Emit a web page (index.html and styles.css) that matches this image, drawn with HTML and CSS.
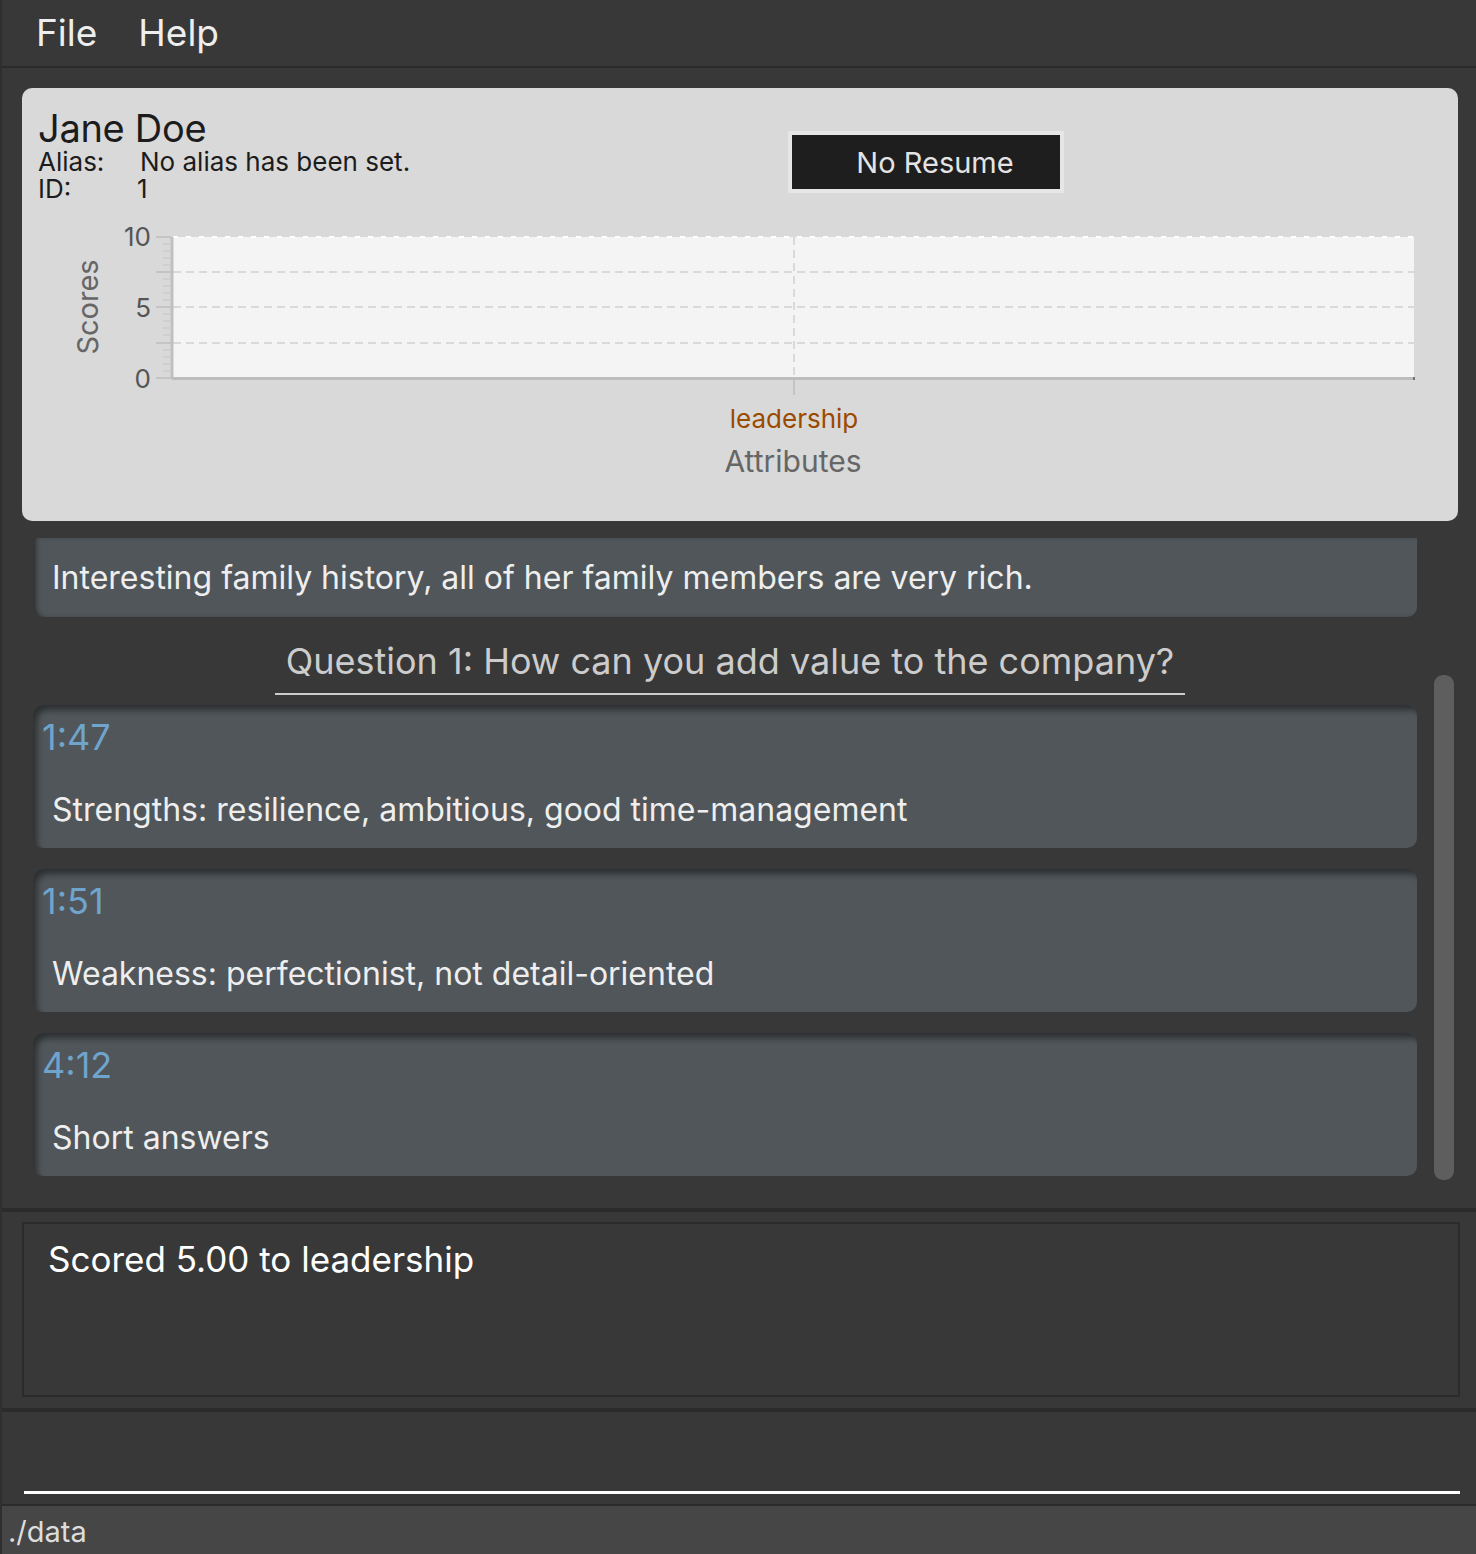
FILE: index.html
```html
<!DOCTYPE html>
<html>
<head>
<meta charset="utf-8">
<link rel="stylesheet" href="styles.css">
</head>
<body>
<div class="app">
  <div class="menubar">
    <span class="menu-item">File</span>
    <span class="menu-item">Help</span>
  </div>

  <div class="main">
    <div class="profile-card">
      <div class="profile-head">
        <div class="profile-info">
          <div class="name">Jane Doe</div>
          <div class="meta-row"><span class="meta-key">Alias:</span><span class="meta-val">No alias has been set.</span></div>
          <div class="meta-row"><span class="meta-key">ID:</span><span class="meta-val id-val">1</span></div>
        </div>
        <div class="resume-btn"><span>No Resume</span></div>
      </div>
      <svg class="chart" width="1435" height="319" viewBox="0 0 1435 319">
        <rect x="151" y="35" width="1241" height="141" fill="#f4f4f4"/>
        <g stroke="#d9d9d9" stroke-width="2" stroke-dasharray="8 5">
          <line x1="151" y1="70" x2="1392" y2="70"/>
          <line x1="151" y1="105" x2="1392" y2="105"/>
          <line x1="151" y1="141" x2="1392" y2="141"/>
          <line x1="772" y1="35" x2="772" y2="176"/>
        </g>
        <line x1="151" y1="35" x2="1392" y2="35" stroke="#ffffff" stroke-width="2" stroke-dasharray="5 8"/>
        <line x1="772" y1="176" x2="772" y2="193" stroke="#c4c4c4" stroke-width="2"/>
        <line x1="150" y1="35" x2="150" y2="177" stroke="#c0c0c0" stroke-width="3"/>
        <g stroke="#cfcfcf" stroke-width="2">
          <line x1="141" y1="42" x2="149" y2="42"/>
          <line x1="141" y1="49" x2="149" y2="49"/>
          <line x1="141" y1="56" x2="149" y2="56"/>
          <line x1="141" y1="63" x2="149" y2="63"/>
          <line x1="141" y1="77" x2="149" y2="77"/>
          <line x1="141" y1="84" x2="149" y2="84"/>
          <line x1="141" y1="91" x2="149" y2="91"/>
          <line x1="141" y1="98" x2="149" y2="98"/>
          <line x1="141" y1="112" x2="149" y2="112"/>
          <line x1="141" y1="119" x2="149" y2="119"/>
          <line x1="141" y1="126" x2="149" y2="126"/>
          <line x1="141" y1="133" x2="149" y2="133"/>
          <line x1="141" y1="148" x2="149" y2="148"/>
          <line x1="141" y1="155" x2="149" y2="155"/>
          <line x1="141" y1="162" x2="149" y2="162"/>
          <line x1="141" y1="169" x2="149" y2="169"/>
        </g>
        <g stroke="#c4c4c4" stroke-width="2">
          <line x1="134" y1="35" x2="149" y2="35"/>
          <line x1="134" y1="70" x2="149" y2="70"/>
          <line x1="134" y1="105" x2="149" y2="105"/>
          <line x1="134" y1="141" x2="149" y2="141"/>
          <line x1="134" y1="176" x2="149" y2="176"/>
        </g>
        <line x1="150" y1="176.5" x2="1392" y2="176.5" stroke="#bdbdbd" stroke-width="3"/>
        <line x1="1392" y1="175" x2="1392" y2="178" stroke="#555" stroke-width="1.5"/>
        <g class="tick-label" text-anchor="end">
          <text x="129" y="44">10</text>
          <text x="129" y="115">5</text>
          <text x="129" y="186">0</text>
        </g>
        <text class="axis-title" transform="translate(76 105) rotate(-90)" text-anchor="middle">Scores</text>
        <text class="cat-label" x="772" y="226" text-anchor="middle">leadership</text>
        <text class="axis-title x-title" x="771" y="270" text-anchor="middle">Attributes</text>
      </svg>
    </div>

    <div class="lower">
      <div class="content-col">
        <div class="note">Interesting family history, all of her family members are very rich.</div>
        <div class="question-wrap">
          <div class="question">Question 1: How can you add value to the company?</div>
        </div>
        <div class="answers">
          <div class="answer">
            <div class="time">1:47</div>
            <div class="answer-text">Strengths: resilience, ambitious, good time-management</div>
          </div>
          <div class="answer">
            <div class="time">1:51</div>
            <div class="answer-text">Weakness: perfectionist, not detail-oriented</div>
          </div>
          <div class="answer">
            <div class="time">4:12</div>
            <div class="answer-text">Short answers</div>
          </div>
        </div>
      </div>
      <div class="scroll-track"><div class="scroll-thumb"></div></div>
    </div>
  </div>

  <div class="result-panel">
    <div class="result-box">Scored 5.00 to leadership</div>
  </div>

  <div class="command-panel">
    <div class="command-input"></div>
  </div>

  <div class="statusbar">./data</div>
</div>
</body>
</html>
```

FILE: styles.css
```css
html, body {
  margin: 0;
  padding: 0;
  background: #383838;
}

body {
  font-family: Inter, "Noto Sans", "Liberation Sans", sans-serif;
  color: #eeeeee;
}

.app {
  width: 1476px;
  height: 1554px;
  box-sizing: border-box;
  border-left: 2px solid #2f2f2f;
  display: flex;
  flex-direction: column;
  overflow: hidden;
}

.menubar {
  border-bottom: 2px solid #2b2b2b;
  display: flex;
  align-items: center;
  padding-left: 34px;
  padding-bottom: 2px;
  box-sizing: content-box;
  height: 64px;
  gap: 41px;
  flex: none;
}

.menu-item {
  font-size: 37px;
  color: #eeeeee;
}

.main {
  height: 1140px;
  flex: none;
  padding: 20px 18px 0 20px;
  box-sizing: border-box;
}

.profile-card {
  background: #d9d9d9;
  border-radius: 10px;
  height: 433px;
  overflow: hidden;
}

.profile-head {
  display: flex;
  padding: 20px 0 0 16px;
  height: 114px;
  box-sizing: border-box;
}

.profile-info {
  width: 750px;
  color: #1c1c1c;
}

.name {
  font-size: 38px;
  line-height: 40px;
  letter-spacing: -0.3px;
}

.meta-row {
  font-size: 26px;
  line-height: 27px;
  display: flex;
}

.meta-key {
  width: 102px;
}

.id-val {
  margin-left: -3px;
}

.resume-btn {
  margin-top: 23px;
  width: 268px;
  height: 54px;
  box-sizing: content-box;
  padding-left: 0;
  background: #1e1e1e;
  border: 4px solid #e6e6e6;
  display: flex;
  align-items: center;
  justify-content: center;
  color: #e4e4e4;
  font-size: 29px;
}

.resume-btn span {
  margin-left: 18px;
}

.chart {
  display: block;
}

.tick-label text {
  font-size: 26px;
  fill: #555555;
}

.axis-title {
  font-size: 29px;
  fill: #666666;
}

.x-title {
  font-size: 30px;
}

.cat-label {
  font-size: 26px;
  fill: #9b4a00;
}

.lower {
  display: flex;
  margin-top: 17px;
}

.content-col {
  width: 1384px;
  margin-left: 11px;
}

.note {
  height: 79px;
  background: #50565a;
  border-radius: 0 0 10px 10px;
  box-shadow: inset 5px 0 5px -2px rgba(0, 0, 0, 0.45);
  display: flex;
  align-items: center;
  padding-left: 19px;
  font-size: 32px;
  color: #eeeeee;
}

.question-wrap {
  display: flex;
  justify-content: center;
  padding-left: 10px;
  margin-top: 21px;
}

.question {
  font-size: 36px;
  line-height: 46px;
  color: #cccccc;
  padding: 0 11px 9px;
  border-bottom: 2px solid #cccccc;
}

.answers {
  margin-top: 10px;
  display: flex;
  flex-direction: column;
  gap: 21px;
}

.answer {
  height: 143px;
  box-sizing: border-box;
  background: #50565a;
  border-radius: 10px;
  box-shadow: inset 5px 6px 6px -1px rgba(0, 0, 0, 0.45);
  padding: 12px 10px 0 9px;
}

.time {
  font-size: 36px;
  line-height: 40px;
  color: #6fa4cc;
}

.answer-text {
  margin-top: 35px;
  margin-left: 10px;
  font-size: 32px;
  line-height: 36px;
  color: #eeeeee;
}

.scroll-track {
  width: 20px;
  margin-left: 17px;
}

.scroll-thumb {
  margin-top: 137px;
  height: 505px;
  background: #5e5e5e;
  border-radius: 9px;
}

.result-panel {
  height: 204px;
  flex: none;
  border-top: 4px solid #2b2b2b;
  border-bottom: 4px solid #2b2b2b;
  box-sizing: border-box;
  padding: 10px 16px 0 20px;
}

.result-box {
  height: 175px;
  box-sizing: border-box;
  border: 2px solid #2b2b2b;
  padding: 10px 24px;
  font-size: 35px;
  line-height: 50px;
  color: #ffffff;
}

.command-panel {
  height: 94px;
  flex: none;
  box-sizing: border-box;
  padding: 79px 16px 0 22px;
  border-bottom: 2px solid #2b2b2b;
}

.command-input {
  border-bottom: 3px solid #ffffff;
}

.statusbar {
  flex: 1;
  background: #464646;
  padding-left: 6px;
  font-size: 29px;
  line-height: 52px;
  color: #dddddd;
}
```
